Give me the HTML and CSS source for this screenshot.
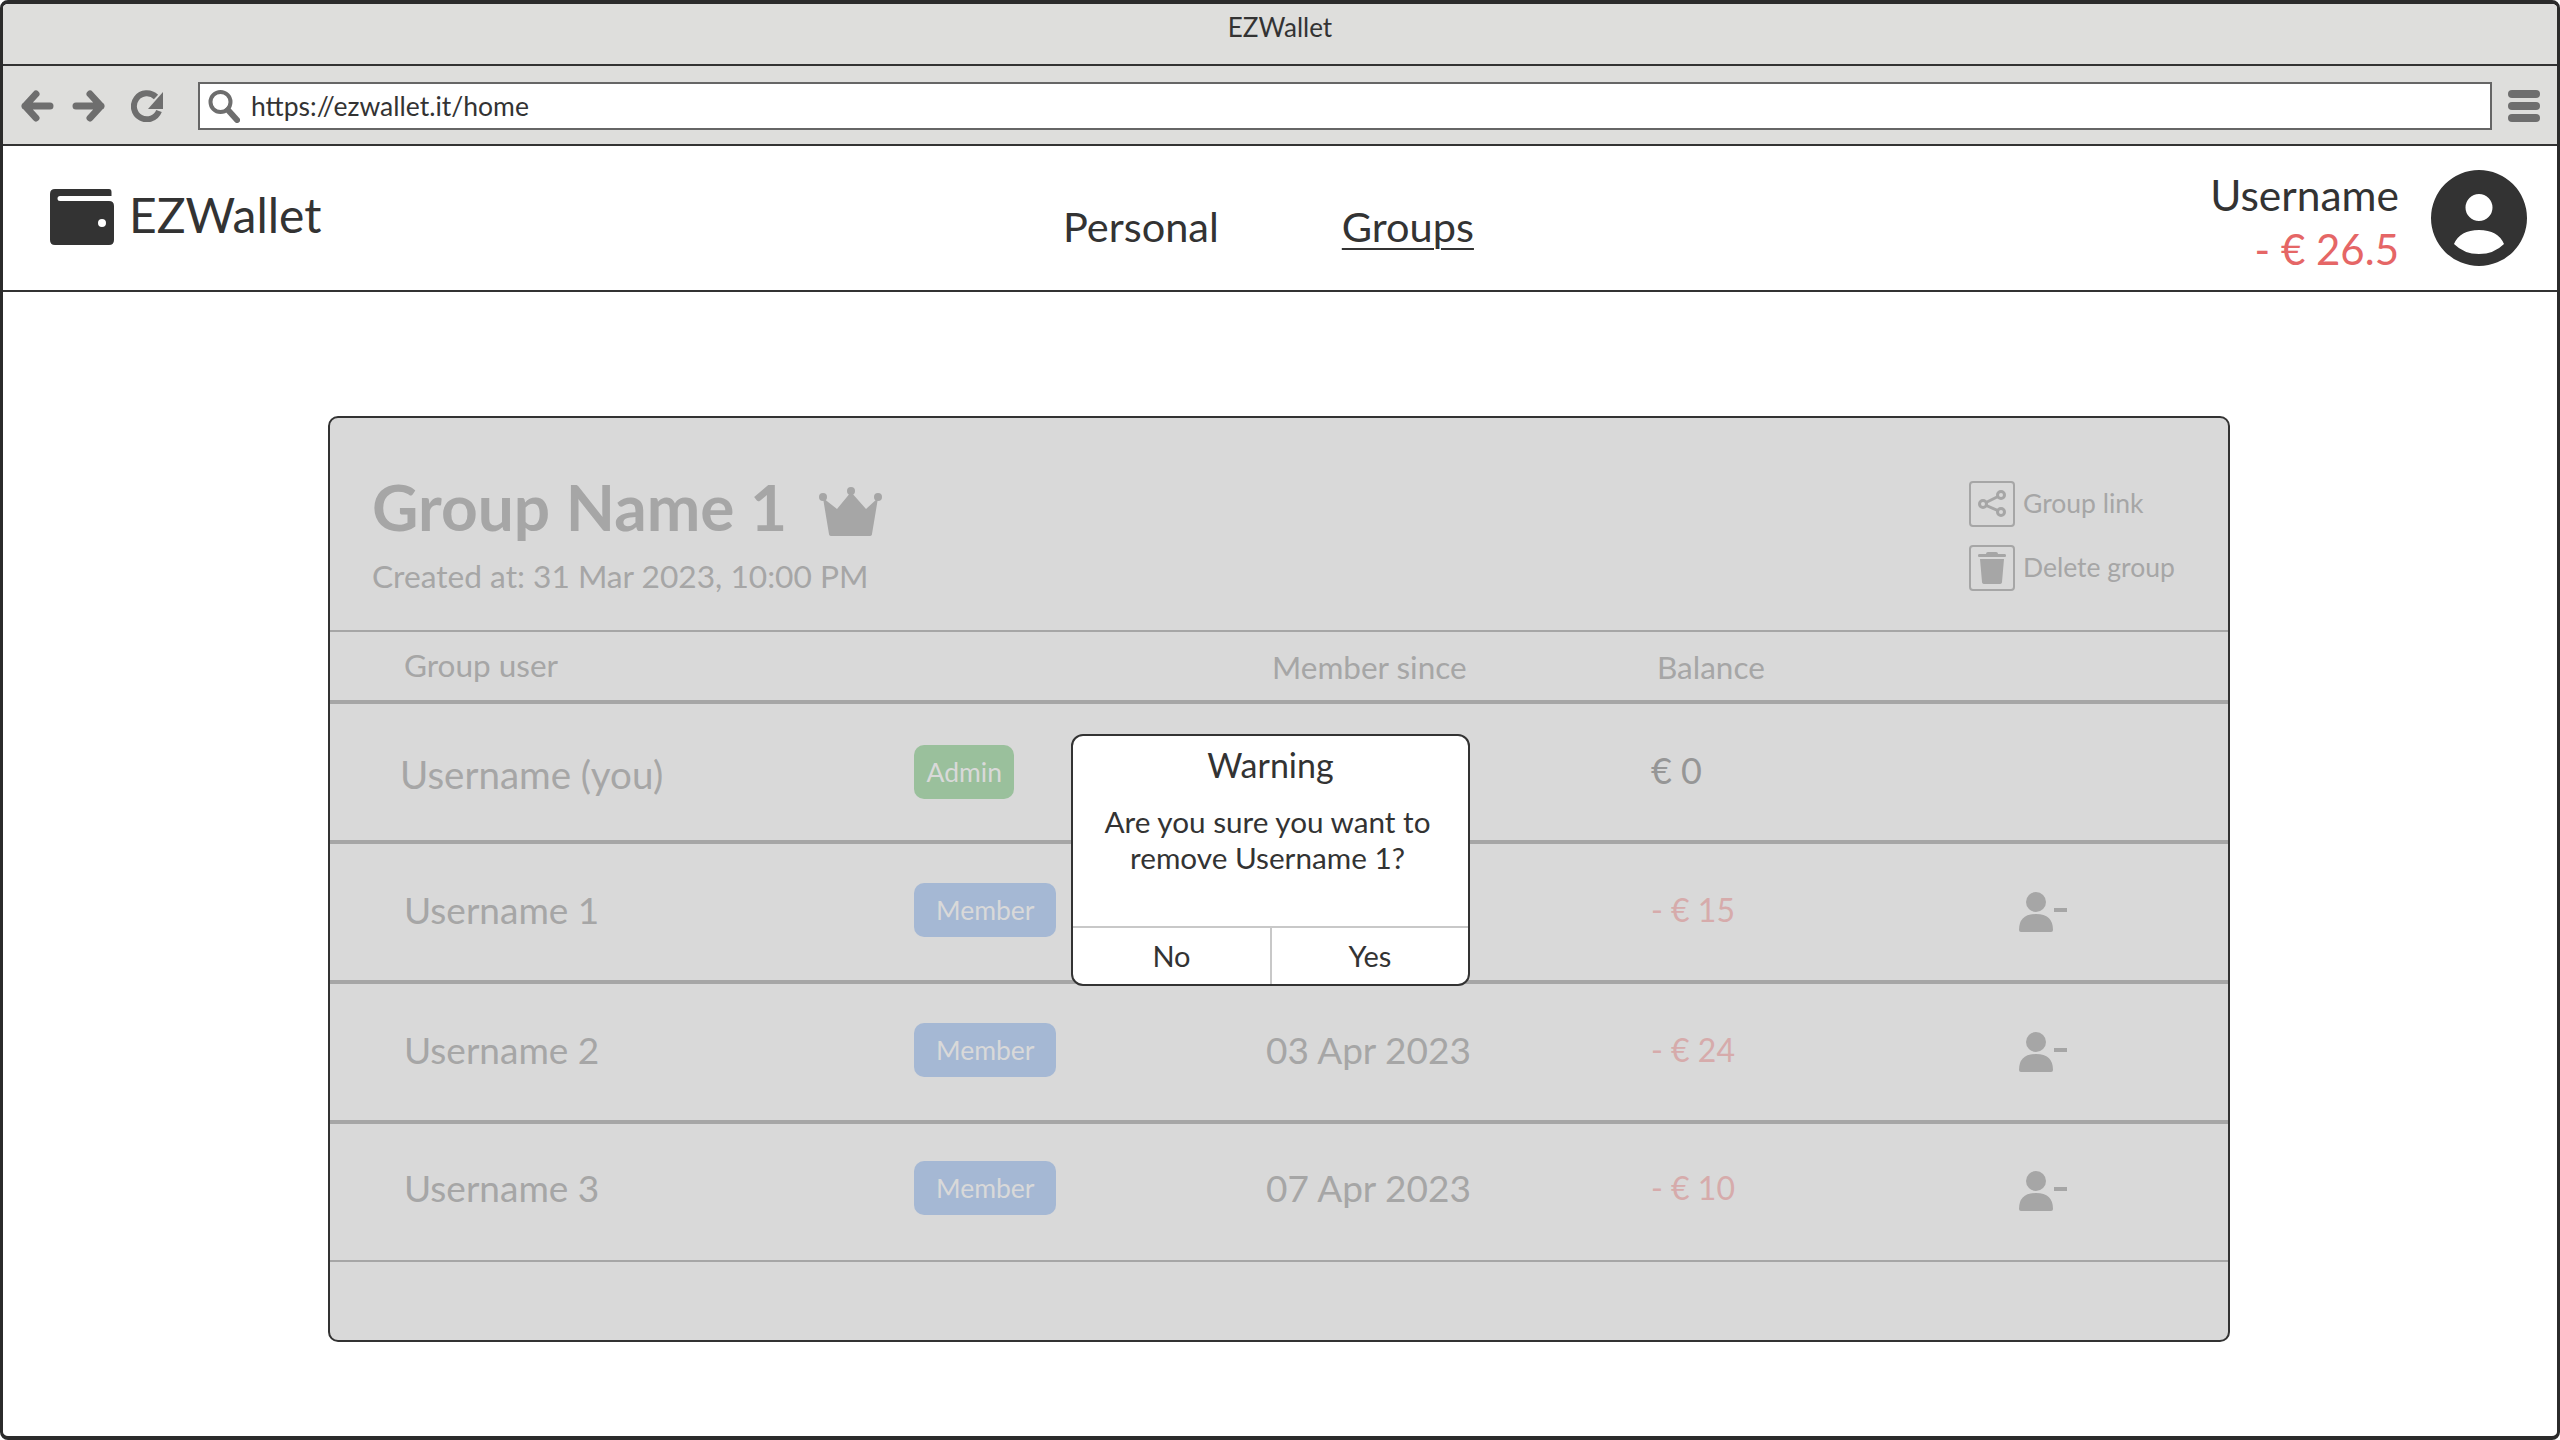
FILE: index.html
```html
<!DOCTYPE html>
<html lang="en">
  <head>
    <meta charset="UTF-8" />
    <title>EZWallet</title>
    <link rel="stylesheet" href="styles.css">
  </head>
  <body>
    <div class="window">
      <div class="title-bar">EZWallet</div>

      <div class="tool-bar">
        <svg class="tool-icon" width="33" height="32" viewBox="0 0 33 32"><path d="M15 4 4 16l11 12M4 16h25" /></svg>
        <svg class="tool-icon forward" width="33" height="32" viewBox="0 0 33 32"><path d="M18 4l11 12-11 12M29 16H4" /></svg>
        <svg class="reload" width="33" height="32" viewBox="0 0 33 32">
          <path class="reload-arc" d="M25 7A13 13 0 1 0 28 21" />
          <path class="reload-head" d="M32 2v17H17z" />
        </svg>
        <div class="address">
          <svg class="search" width="32" height="33" viewBox="0 0 32 33">
            <circle cx="12.500" cy="12" r="10" />
            <path d="M20 20l9 10" />
          </svg>
          <span>https://ezwallet.it/home</span>
        </div>
        <div class="burger"><i></i><i></i><i></i></div>
      </div>

      <header class="site-header">
        <div class="brand">
          <svg width="64" height="56" viewBox="0 0 64 56">
            <path fill-rule="evenodd" d="M5 0h54q2.500 0 2.500 3v4H10q-2.500 0-2.500 2.500T10 12h49q5 0 5 5v34q0 5-5 5H5q-5 0-5-5V5q0-5 5-5zM52 30a4 4 0 1 0 0 8 4 4 0 0 0 0-8z" />
          </svg>
          <span class="brand-name">EZWallet</span>
        </div>
        <nav class="main-nav">
          <a>Personal</a>
          <a class="active">Groups</a>
        </nav>
        <div class="account">
          <div class="account-text">
            <div class="account-name">Username</div>
            <div class="account-balance">- € 26.5</div>
          </div>
          <svg width="96" height="96" viewBox="0 0 96 96">
            <path fill-rule="evenodd" d="M48 0a48 48 0 1 1 0 96 48 48 0 0 1 0-96zM48 24a13.500 13.500 0 1 0 0 27 13.500 13.500 0 0 0 0-27zM23 74q10 10 25 10t25-10q-6-14-25-14T23 74z" />
          </svg>
        </div>
      </header>

      <main class="content">
        <section class="card">
          <div class="card-top">
            <div>
              <div class="group-title">
                <h1>Group Name 1</h1>
                <svg width="65" height="50" viewBox="0 0 65 50">
                  <circle cx="5" cy="11" r="4" /><circle cx="33" cy="5" r="4" /><circle cx="60" cy="11" r="4" />
                  <path d="M5 12l14 11L33 6l15 17 12-11-6 36q0 2-3 2H14q-3 0-3-2z" />
                </svg>
              </div>
              <div class="created">Created at: 31 Mar 2023, 10:00 PM</div>
            </div>
            <div class="group-actions">
              <div class="action">
                <span class="action-box">
                  <svg class="share" width="28" height="28" viewBox="0 0 28 28">
                    <path d="M5 14 23 5M5 14l18 8" />
                    <circle cx="5" cy="14" r="3.500" /><circle cx="23" cy="5" r="3.500" /><circle cx="23" cy="22" r="3.500" />
                  </svg>
                </span>
                <span class="action-label">Group link</span>
              </div>
              <div class="action">
                <span class="action-box">
                  <svg class="trash" width="28" height="32" viewBox="0 0 28 32">
                    <path d="M10 0h8q2 0 2 2h7q1 0 1 1.500T27 5H1Q0 5 0 3.500T1 2h7q0-2 2-2zM2 7h24l-2 23q0 2-3 2H7q-3 0-3-2z" />
                  </svg>
                </span>
                <span class="action-label">Delete group</span>
              </div>
            </div>
          </div>

          <div class="table-head">
            <span class="head-user">Group user</span>
            <span></span>
            <span class="head-since">Member since</span>
            <span class="head-balance">Balance</span>
          </div>

          <div class="row">
            <span class="name you">Username (you)</span>
            <span><b class="badge admin">Admin</b></span>
            <span></span>
            <span class="balance zero">€ 0</span>
            <span></span>
          </div>

          <div class="row">
            <span class="name">Username 1</span>
            <span><b class="badge member">Member</b></span>
            <span></span>
            <span class="balance">- € 15</span>
            <svg class="remove" width="48" height="40" viewBox="0 0 48 40"><circle cx="17" cy="10" r="10" /><path d="M0 38q0-16 17-16t17 16q0 2-2 2H2q-2 0-2-2zM35 16h13v4H35z" /></svg>
          </div>

          <div class="row">
            <span class="name">Username 2</span>
            <span><b class="badge member">Member</b></span>
            <span class="since">03 Apr 2023</span>
            <span class="balance">- € 24</span>
            <svg class="remove" width="48" height="40" viewBox="0 0 48 40"><circle cx="17" cy="10" r="10" /><path d="M0 38q0-16 17-16t17 16q0 2-2 2H2q-2 0-2-2zM35 16h13v4H35z" /></svg>
          </div>

          <div class="row last">
            <span class="name">Username 3</span>
            <span><b class="badge member">Member</b></span>
            <span class="since">07 Apr 2023</span>
            <span class="balance">- € 10</span>
            <svg class="remove" width="48" height="40" viewBox="0 0 48 40"><circle cx="17" cy="10" r="10" /><path d="M0 38q0-16 17-16t17 16q0 2-2 2H2q-2 0-2-2zM35 16h13v4H35z" /></svg>
          </div>

          <div class="modal">
            <div class="modal-body">
              <h2>Warning</h2>
              <p>Are you sure you want to<br>remove Username 1?</p>
            </div>
            <div class="modal-buttons">
              <span>No</span>
              <span>Yes</span>
            </div>
          </div>
        </section>
      </main>
    </div>
  </body>
</html>
```

FILE: styles.css
```css
* {
  margin: 0;
  padding: 0;
  box-sizing: border-box;
  font-family: 'Lato', 'Noto Sans', sans-serif;
}

body {
  background: #fff;
  color: #333;
  height: 1440px;
  overflow: hidden;
}

.window {
  height: 1440px;
  display: flex;
  flex-direction: column;
  border: 4px solid #2b2b2b;
  border-width: 4px 3px;
  border-radius: 8px;
  overflow: hidden;
}

.title-bar {
  height: 62px;
  flex: none;
  background: #dededc;
  border-bottom: 2px solid #333;
  display: flex;
  align-items: center;
  justify-content: center;
  font-size: 26px;
  padding-bottom: 14px;
}

.tool-bar {
  height: 80px;
  flex: none;
  background: #dededc;
  border-bottom: 2px solid #333;
  display: flex;
  align-items: center;
  padding: 2px 17px 0 18px;
}

.tool-icon {
  flex: none;
}

.tool-icon path {
  fill: none;
  stroke: #6e6e6e;
  stroke-width: 7;
  stroke-linecap: round;
  stroke-linejoin: round;
}

.tool-icon.forward {
  margin-left: 18px;
}

.reload {
  flex: none;
  margin-left: 26px;
  margin-right: 34px;
}

.reload-arc {
  fill: none;
  stroke: #6e6e6e;
  stroke-width: 6;
}

.reload-head {
  fill: #6e6e6e;
}

.address {
  flex: 1;
  height: 48px;
  background: #fff;
  border: 2px solid #666;
  display: flex;
  align-items: center;
  gap: 11px;
  padding: 0 0 0 8px;
  font-size: 26.500px;
}

.search {
  flex: none;
}

.search circle,
.search path {
  fill: none;
  stroke: #6e6e6e;
  stroke-width: 4;
  stroke-linecap: round;
}

.search path {
  stroke-width: 6;
}

.burger {
  width: 32px;
  flex: none;
  margin-left: 16px;
  display: flex;
  flex-direction: column;
  gap: 4px;
}

.burger i {
  height: 8px;
  background: #6e6e6e;
  border-radius: 4px;
}

.site-header {
  height: 146px;
  flex: none;
  border-bottom: 2px solid #333;
  display: flex;
  align-items: center;
  padding: 0 30px 0 47px;
}

.brand {
  display: flex;
  align-items: center;
  gap: 15px;
  font-size: 48px;
  margin-top: -2px;
  width: 1013px;
}

.brand-name {
  padding-bottom: 6px;
}

.brand svg {
  fill: #333;
}

.main-nav {
  display: flex;
  gap: 122px;
  font-size: 41.500px;
  margin-top: 15px;
}

.main-nav .active {
  margin-left: 1px;
  text-decoration: underline;
  text-underline-offset: 6px;
  text-decoration-thickness: 2px;
}

.account {
  margin-left: auto;
  display: flex;
  align-items: center;
  gap: 32px;
}

.account-text {
  text-align: right;
  padding-top: 8px;
}

.account-name {
  font-size: 42.500px;
  line-height: 55px;
}

.account-balance {
  font-size: 42px;
  line-height: 55px;
  color: #e56666;
}

.account svg {
  fill: #333;
}

.content {
  flex: 1;
  padding: 124px 0 0 325px;
}

.card {
  position: relative;
  width: 1902px;
  height: 926px;
  background: #d9d9d9;
  border: 2px solid #333;
  border-radius: 10px;
  color: #a6a6a6;
}

.card-top {
  height: 214px;
  border-bottom: 2px solid #a6a6a6;
  display: flex;
  justify-content: space-between;
  padding: 56px 0 0 42px;
}

.group-title {
  display: flex;
  align-items: center;
  gap: 31px;
  height: 64px;
}

.group-title h1 {
  font-size: 64px;
  font-weight: 700;
}

.group-title svg {
  fill: #a6a6a6;
  margin-top: 9px;
}

.created {
  font-size: 31.700px;
  margin-top: 19px;
}

.group-actions {
  width: 259px;
  padding-top: 7px;
  display: flex;
  flex-direction: column;
  gap: 18px;
}

.action {
  display: flex;
  align-items: center;
  gap: 8px;
  font-size: 26.500px;
  height: 46px;
}

.action-label {
  padding-bottom: 3px;
}

.action-box {
  width: 46px;
  height: 46px;
  border: 2px solid #a6a6a6;
  border-radius: 4px;
  display: flex;
  align-items: center;
  justify-content: center;
}

.action-box svg {
  fill: #a6a6a6;
}

.share circle {
  fill: #d9d9d9;
  stroke: #a6a6a6;
  stroke-width: 3;
}

.share path {
  stroke: #a6a6a6;
  stroke-width: 3;
}

.table-head,
.row {
  display: grid;
  grid-template-columns: 510px 353px 388px 364px 1fr;
  align-items: center;
  padding-left: 74px;
}

.table-head {
  height: 72px;
  border-bottom: 4px solid #a6a6a6;
  font-size: 31.500px;
}

.head-user {
  padding-bottom: 3px;
}

.head-since {
  padding: 2px 0 0 5px;
}

.head-balance {
  padding: 2px 0 0 2px;
}

.row {
  height: 140px;
  border-bottom: 4px solid #a6a6a6;
  font-size: 37px;
}

.row.last {
  height: 138px;
  border-bottom-width: 2px;
  padding-bottom: 3px;
}

.name {
  padding-bottom: 6px;
}

.you {
  margin-left: -4px;
  padding-bottom: 0;
  padding-top: 4px;
  font-size: 38.500px;
}

.badge {
  display: inline-flex;
  align-items: center;
  height: 54px;
  padding: 0 22px;
  border-radius: 10px;
  font-size: 26.500px;
  font-weight: 400;
  color: #d9d9d9;
  margin-bottom: 5px;
}

.admin {
  background: #9ac09c;
  padding: 0 12.500px;
  margin-bottom: 0;
}

.member {
  background: #a5b8d4;
}

.since {
  padding-bottom: 6px;
  margin-left: -1px;
}

.balance {
  font-size: 32px;
  color: #d6abab;
  padding-bottom: 6px;
  margin-left: -4px;
}

.zero {
  color: #969696;
  font-size: 36px;
  padding-bottom: 4px;
}

.remove {
  fill: #a6a6a6;
}

.modal {
  position: absolute;
  left: 741px;
  top: 316px;
  width: 399px;
  height: 252px;
  background: #fff;
  border: 2px solid #333;
  border-radius: 12px;
  color: #333;
  text-align: center;
  display: flex;
  flex-direction: column;
  overflow: hidden;
}

.modal-body {
  flex: 1;
}

.modal-body h2 {
  font-size: 34px;
  font-weight: 400;
  margin-top: 8px;
}

.modal-body p {
  font-size: 29.700px;
  line-height: 36px;
  margin-top: 19px;
  padding-right: 6px;
}

.modal-buttons {
  height: 58px;
  display: grid;
  grid-template-columns: 199px 1fr;
  border-top: 2px solid #c8c8c8;
  font-size: 29px;
}

.modal-buttons span {
  display: flex;
  align-items: center;
  justify-content: center;
  padding-bottom: 2px;
}

.modal-buttons span:first-child {
  border-right: 2px solid #c8c8c8;
}
```
